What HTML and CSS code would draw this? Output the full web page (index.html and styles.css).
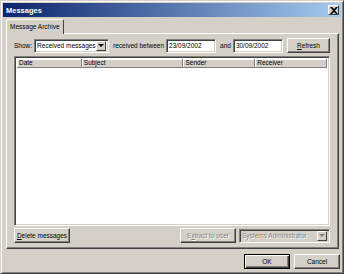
FILE: index.html
```html
<!DOCTYPE html>
<html>
<head>
<meta charset="utf-8">
<link rel="stylesheet" href="styles.css">
</head>
<body>
<div class="window">
  <div class="titlebar">
    <span class="title">Messages</span>
    <span class="close"><svg width="8" height="7" viewBox="0 0 8 7"><path d="M0 0h2l2 2 2-2h2L5 3.5 8 7H6L4 5 2 7H0l3-3.5z" fill="#000"/></svg></span>
  </div>
  <div class="content">
    <div class="tabs"><div class="tab">Message Archive</div></div>
    <div class="panel">
      <div class="filter">
        <span class="lbl">Show:</span>
        <div class="combo show"><span class="ctext">Received messages</span><span class="cbtn"><i class="arrow"></i></span></div>
        <span class="lbl">received between</span>
        <div class="field">23/09/2002</div>
        <span class="lbl">and</span>
        <div class="field">30/09/2002</div>
        <div class="btn refresh"><u>R</u>efresh</div>
      </div>
      <div class="list">
        <div class="header">
          <div class="col c1">Date</div>
          <div class="col c2">Subject</div>
          <div class="col c3">Sender</div>
          <div class="col c4">Receiver</div>
        </div>
      </div>
      <div class="actions">
        <div class="btn del"><u>D</u>elete messages</div>
        <div class="spacer"></div>
        <div class="btn extract disabled">E<u>x</u>tract to user</div>
        <div class="combo user disabled"><span class="ctext">Systems Administrator</span><span class="cbtn"><i class="arrow"></i></span></div>
      </div>
    </div>
    <div class="footer">
      <div class="btn ok default">OK</div>
      <div class="btn cancel">Cancel</div>
    </div>
  </div>
</div>
</body>
</html>
```

FILE: styles.css
```css
* { box-sizing: border-box; }
html, body { margin: 0; padding: 0; }
body {
  width: 344px; height: 274px; overflow: hidden;
  font-family: "Liberation Sans", Arial, sans-serif;
  font-size: 6.5px;
  color: #000;
  background: #d4d0c8;
  white-space: nowrap;
}
.window {
  width: 344px; height: 274px;
  background: #d4d0c8;
  border: 1px solid;
  border-color: #d4d0c8 #404040 #404040 #d4d0c8;
  box-shadow: inset 1px 1px 0 #fff, inset -1px -1px 0 #808080;
  display: flex; flex-direction: column;
  padding: 2px;
}
.titlebar {
  height: 14px; flex: none;
  background: linear-gradient(to right, #0a246a, #a6caf0);
  display: flex; align-items: center; justify-content: space-between;
  padding: 0 2px 0 3px;
}
.title { color: #fff; font-weight: bold; font-size: 7.5px; }
.close {
  width: 11px; height: 10px; background: #d4d0c8;
  border: 1px solid; border-color: #fff #404040 #404040 #fff;
  display: flex; align-items: center; justify-content: center;
}
.close svg { display: block; }
.content { flex: 1; display: flex; flex-direction: column; padding: 2px 0 0 3px; }
.tabs { display: flex; height: 14px; padding-left: 0; flex: none; }
.tab {
  border: 1px solid; border-bottom: none;
  border-color: #fff #404040 transparent #fff;
  padding: 3px 3px 0 3px;
  height: 15px;
  position: relative; z-index: 1; background: #d4d0c8;
  border-radius: 2px 2px 0 0;
}
.panel {
  height: 216px; flex: none; width: 333px;
  border: 1px solid; border-color: #fff #404040 #404040 #fff;
  box-shadow: inset -1px -1px 0 #808080;
  padding: 4px 8px 5px 7px;
  display: flex; flex-direction: column;
}
.filter { display: flex; align-items: center; height: 16px; gap: 0; }
.lbl { margin-right: 2px; }
.combo {
  height: 14px; background: #fff;
  border: 1px solid; border-color: #808080 #fff #fff #808080;
  box-shadow: inset 1px 1px 0 #404040, inset -1px -1px 0 #d4d0c8;
  display: flex; align-items: center; padding: 0 2px 0 2px;
}
.combo .ctext { flex: 1; }
.combo.show { width: 75px; margin-right: 4px; }
.cbtn {
  width: 10px; height: 10px; background: #d4d0c8;
  border: 1px solid; border-color: #fff #404040 #404040 #fff;
  display: flex; align-items: center; justify-content: center;
}
.arrow { width: 0; height: 0; border-left: 3px solid transparent; border-right: 3px solid transparent; border-top: 3px solid #000; }
.field {
  width: 50px; height: 14px; background: #fff;
  border: 1px solid; border-color: #808080 #fff #fff #808080;
  box-shadow: inset 1px 1px 0 #404040, inset -1px -1px 0 #d4d0c8;
  padding: 0 2px; line-height: 12px; margin-right: 3px;
}
.field + .lbl { margin-left: 1px; }
.btn {
  height: 15px; display: flex; align-items: center; justify-content: center;
  border: 1px solid; border-color: #fff #404040 #404040 #fff;
  box-shadow: inset -1px -1px 0 #808080;
  background: #d4d0c8;
}
.refresh { width: 43px; margin-left: auto; }
.list {
  margin-top: 2px;
  height: 172px; background: #fff;
  border: 1px solid; border-color: #808080 #fff #fff #808080;
  box-shadow: inset 1px 1px 0 #404040, inset -1px -1px 0 #d4d0c8;
  padding: 2px;
}
.header { display: flex; height: 9px; }
.col {
  height: 9px; line-height: 8px; padding-left: 2px;
  background: #d4d0c8;
  border-right: 1px solid #808080;
  border-bottom: 1px solid #808080;
  box-shadow: inset 1px 1px 0 #fff;
}
.c1 { width: 65px; }
.c2 { width: 102px; }
.c3 { width: 72px; }
.c4 { width: 72px; }
.actions { display: flex; align-items: center; margin-top: 2px; }
.del { width: 56px; }
.spacer { flex: 1; }
.disabled { color: #808080; text-shadow: 1px 1px 0 #fff; }
.extract { width: 56px; margin-right: 3px; }
.combo.user { width: 91px; background: #d4d0c8; }
.combo.user .arrow { border-top-color: #808080; }
.footer { display: flex; justify-content: flex-end; gap: 4px; margin-top: 5px; padding-right: 1px; }
.ok, .cancel { width: 46px; }
.default { border: 1px solid #000; box-shadow: inset 1px 1px 0 #fff, inset -1px -1px 0 #404040, inset -2px -2px 0 #808080; }
```
